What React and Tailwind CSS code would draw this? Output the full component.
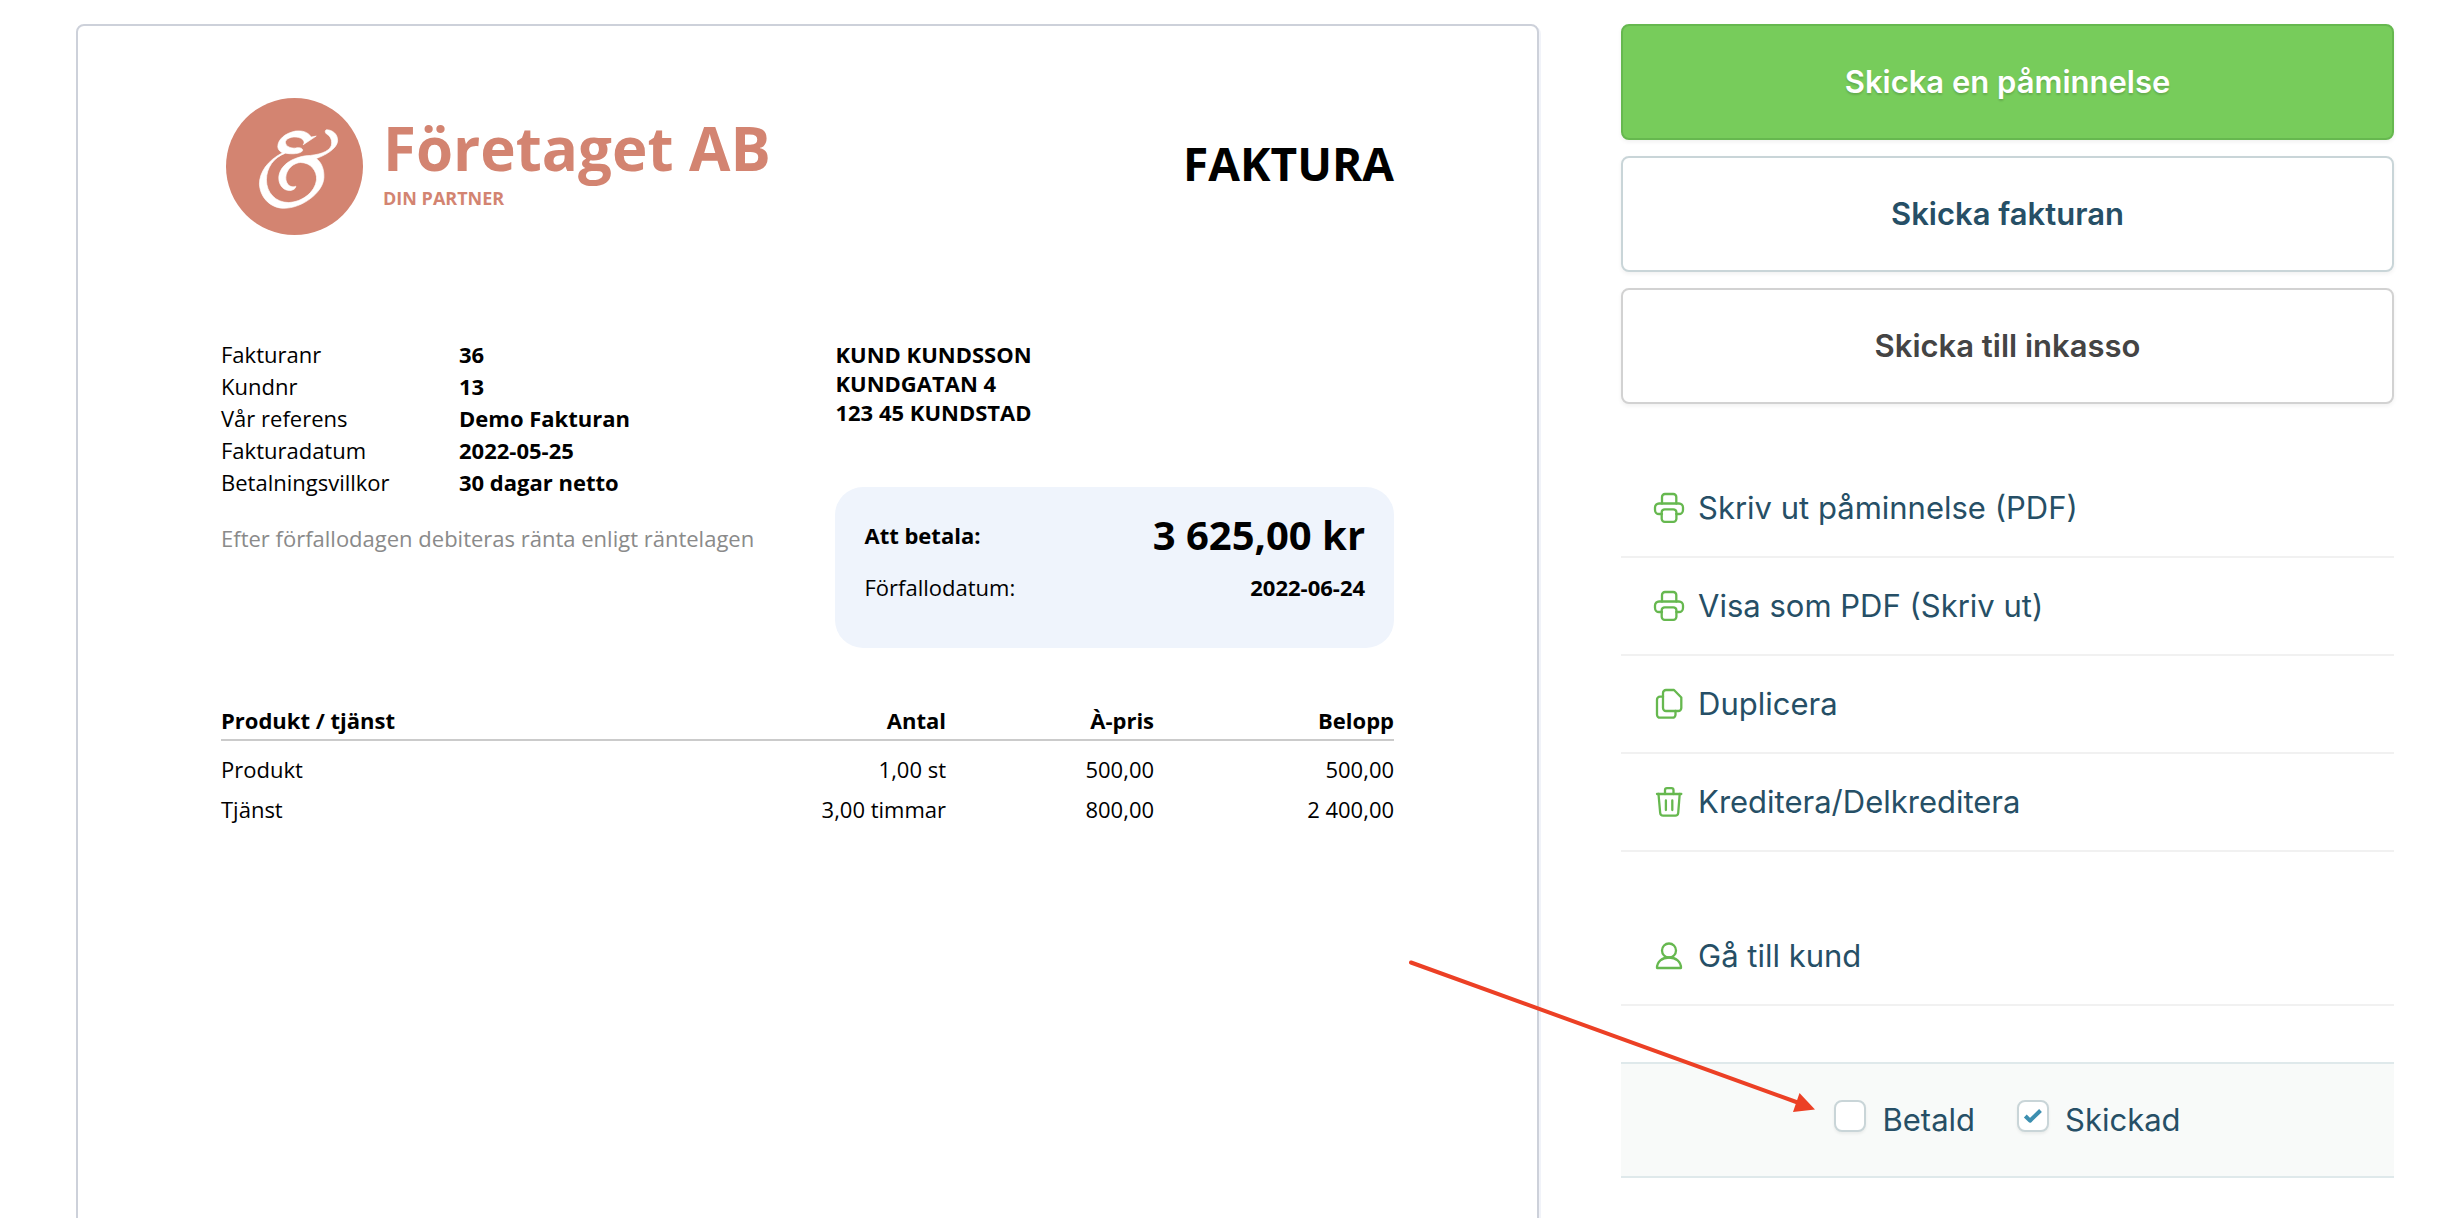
import React, { useState } from "react";
import clsx from "clsx";

const meta = [
  { label: "Fakturanr", value: "36" },
  { label: "Kundnr", value: "13" },
  { label: "Vår referens", value: "Demo Fakturan" },
  { label: "Fakturadatum", value: "2022-05-25" },
  { label: "Betalningsvillkor", value: "30 dagar netto" },
];

const rows = [
  { name: "Produkt", amount: "1,00 st", price: "500,00", total: "500,00" },
  { name: "Tjänst", amount: "3,00 timmar", price: "800,00", total: "2 400,00" },
];

const Icon = ({ children }) => (
  <svg
    viewBox="0 0 32 32"
    className="size-8 shrink-0 text-[#66b84f]"
    fill="none"
    stroke="currentColor"
    strokeWidth="2.3"
    strokeLinecap="round"
    strokeLinejoin="round"
    aria-hidden="true"
  >
    {children}
  </svg>
);

const PrinterIcon = () => (
  <Icon>
    <path d="M9 11.500V5a3 3 0 0 1 3-3h8.300a3 3 0 0 1 3 3v6.500" />
    <path d="M9 22H6a4 4 0 0 1-4-4v-2.500a4 4 0 0 1 4-4h20a4 4 0 0 1 4 4V18a4 4 0 0 1-4 4h-2.700" />
    <rect x="8.700" y="17.300" width="14.700" height="12.500" rx="3" />
  </Icon>
);

const CopyIcon = () => (
  <Icon>
    <path d="M13 2h8l7.300 7.500V20a3 3 0 0 1-3 3H13a3 3 0 0 1-3-3V5a3 3 0 0 1 3-3z" />
    <path d="M10 8.700H7a3 3 0 0 0-3 3v15a3 3 0 0 0 3 3h12.500a3 3 0 0 0 3-3V23" />
  </Icon>
);

const TrashIcon = () => (
  <Icon>
    <path d="M4 8h24.300" />
    <path d="M12 8V4.200a2 2 0 0 1 2-2h4.500a2 2 0 0 1 2 2V8" />
    <path d="M5.500 8l1.700 19a3 3 0 0 0 3 2.700h12a3 3 0 0 0 3-2.700l1.500-19" />
    <path d="M12.900 14.500v9.500M19.300 14.500v9.500" />
  </Icon>
);

const UserIcon = () => (
  <Icon>
    <circle cx="16" cy="10.500" r="7" />
    <path d="M4 28h24c0-6.500-5-10.500-12-10.500S4 21.500 4 28z" />
  </Icon>
);

const documentLinks = [
  { label: "Skriv ut påminnelse (PDF)", icon: PrinterIcon },
  { label: "Visa som PDF (Skriv ut)", icon: PrinterIcon },
  { label: "Duplicera", icon: CopyIcon },
  { label: "Kreditera/Delkreditera", icon: TrashIcon },
];

const customerLinks = [{ label: "Gå till kund", icon: UserIcon }];

const Logo = () => (
  <div className="ml-[5px] flex gap-5 text-[#d38471]">
    <svg viewBox="17 17 410 410" className="size-[137px] shrink-0" aria-hidden="true">
      <circle cx="222" cy="222" r="205" fill="currentColor" />
      <path
        fill="#fff"
        stroke="#fff"
        strokeWidth="2"
        d="M287 131L272 134C262 118 245 114 225 116C195 122 172 140 172 163C173 172 178 177 186 181C140 205 117 240 117 275C120 320 155 347 190 347C245 347 308 300 310 255C311 230 303 210 287 198C310 190 350 170 351 145C352 125 335 112 318 112C312 114 313 122 320 126C330 132 336 145 332 160C325 178 295 188 255 190C205 198 175 225 175 258C176 280 190 294 208 294C218 293 226 288 226 281C218 284 205 284 199 270C188 245 210 212 240 210C270 210 290 235 288 262C283 300 245 328 205 330C165 330 138 300 138 262C138 225 160 195 195 182C215 186 240 184 246 175C248 166 235 164 225 167C205 168 193 158 195 147C200 134 225 130 240 137C250 143 254 150 248 157Z"
      />
    </svg>
    <div className="pt-5 font-bold">
      <p className="text-[60px] leading-[60px]">Företaget AB</p>
      <p className="mt-2 text-[18px] leading-6">DIN PARTNER</p>
    </div>
  </div>
);

const Invoice = () => (
  <article className="min-h-screen rounded-lg border-2 border-[#cdd1da] bg-white px-[143px] pt-[72px] font-['Open_Sans',sans-serif] text-[22px] leading-8 text-black shadow-[2px_2px_0_#f1f3f9]">
    <header className="flex items-center justify-between">
      <Logo />
      <h1 className="pb-2 text-[46px] leading-[56px] font-bold">FAKTURA</h1>
    </header>

    <div className="mt-[103px] grid grid-cols-[11fr_10fr]">
      <div>
        <dl className="grid grid-cols-[238px_1fr]">
          {meta.map((item) => (
            <React.Fragment key={item.label}>
              <dt>{item.label}</dt>
              <dd className="font-bold">{item.value}</dd>
            </React.Fragment>
          ))}
        </dl>
        <p className="mt-6 text-[#8a8a8a]">Efter förfallodagen debiteras ränta enligt räntelagen</p>
      </div>

      <div className="pt-0.5">
        <address className="leading-[29px] font-bold not-italic">
          KUND KUNDSSON
          <br />
          KUNDGATAN 4
          <br />
          123 45 KUNDSTAD
        </address>
        <div className="mt-[60px] rounded-[28px] bg-[#eff4fc] px-[29px] pt-5 pb-[45px]">
          <div className="flex items-center justify-between font-bold">
            <span>Att betala:</span>
            <span className="text-[40px] leading-[56px]">3 625,00 kr</span>
          </div>
          <div className="mt-2 flex items-center justify-between">
            <span>Förfallodatum:</span>
            <span className="font-bold">2022-06-24</span>
          </div>
        </div>
      </div>
    </div>

    <table className="mt-14 w-full table-fixed">
      <colgroup>
        <col />
        <col className="w-[200px]" />
        <col className="w-[208px]" />
        <col className="w-[240px]" />
      </colgroup>
      <thead>
        <tr className="border-b-2 border-[#cbcbcb] text-right">
          <th className="pb-[3px] text-left">Produkt / tjänst</th>
          <th className="pb-[3px]">Antal</th>
          <th className="pb-[3px]">À-pris</th>
          <th className="pb-[3px]">Belopp</th>
        </tr>
      </thead>
      <tbody className="text-right leading-10">
        {rows.map((row, i) => (
          <tr key={row.name}>
            <td className={clsx("text-left", i === 0 && "pt-2")}>{row.name}</td>
            <td className={clsx(i === 0 && "pt-2")}>{row.amount}</td>
            <td className={clsx(i === 0 && "pt-2")}>{row.price}</td>
            <td className={clsx(i === 0 && "pt-2")}>{row.total}</td>
          </tr>
        ))}
      </tbody>
    </table>
  </article>
);

const ActionButton = ({ className, children }) => (
  <button
    type="button"
    className={clsx(
      "w-full rounded-lg border-2 py-9 text-center font-semibold shadow-[0_2px_4px_rgba(0,0,0,0.06)]",
      className
    )}
  >
    {children}
  </button>
);

const LinkList = ({ links }) => (
  <ul className="mt-14">
    {links.map(({ label, icon: LinkIcon }) => (
      <li key={label} className="border-b-2 border-[#f1f1f1]">
        <a href="#" className="flex items-center gap-[13px] px-8 py-7">
          <LinkIcon />
          {label}
        </a>
      </li>
    ))}
  </ul>
);

const Checkbox = ({ label, checked, onChange }) => (
  <label className="flex items-center gap-4">
    <span className="relative mb-2 size-8">
      <input
        type="checkbox"
        checked={checked}
        onChange={(e) => onChange(e.target.checked)}
        className="peer block size-8 appearance-none rounded-lg border-2 border-[#c9d5d8] bg-white shadow-[0_2px_3px_rgba(0,0,0,0.06)]"
      />
      <svg
        viewBox="0 0 32 32"
        className="pointer-events-none absolute inset-0 hidden text-[#3d8fb0] peer-checked:block"
        fill="none"
        stroke="currentColor"
        strokeWidth="4"
        strokeLinejoin="round"
        aria-hidden="true"
      >
        <path d="M8.300 16l4.700 4.700L23.500 10.500" />
      </svg>
    </span>
    {label}
  </label>
);

const Arrow = () => (
  <svg
    width="420"
    height="160"
    viewBox="0 0 420 160"
    className="pointer-events-none absolute -top-[109px] -left-[216px] text-[#ec4025]"
    aria-hidden="true"
  >
    <path d="M6 7.500L394 148" stroke="currentColor" strokeWidth="4" strokeLinecap="round" />
    <path d="M410 154.500L394.500 138L388 157z" fill="currentColor" />
  </svg>
);

export default function App() {
  const [paid, setPaid] = useState(false);
  const [sent, setSent] = useState(true);

  return (
    <main className="grid h-screen grid-cols-[53fr_28fr] gap-[82px] overflow-hidden bg-white pt-6 pr-[70px] pl-[76px]">
      <Invoice />

      <aside className="font-['Inter',sans-serif] text-[31px] leading-10 text-[#264f66]">
        <div className="flex flex-col gap-4">
          <ActionButton className="border-[#66b84f] bg-[#77cc5b] text-white [text-shadow:0_2px_2px_rgba(0,0,0,0.15)]">
            Skicka en påminnelse
          </ActionButton>
          <ActionButton className="border-[#c9d5d8] bg-white">Skicka fakturan</ActionButton>
          <ActionButton className="border-[#d2d2d2] bg-white text-[#444444]">Skicka till inkasso</ActionButton>
        </div>

        <LinkList links={documentLinks} />
        <LinkList links={customerLinks} />

        <div className="relative mt-14 flex justify-center gap-[42px] border-y-2 border-[#dfe9eb] bg-[#f8faf9] py-9">
          <Arrow />
          <Checkbox label="Betald" checked={paid} onChange={setPaid} />
          <Checkbox label="Skickad" checked={sent} onChange={setSent} />
        </div>
      </aside>
    </main>
  );
}
